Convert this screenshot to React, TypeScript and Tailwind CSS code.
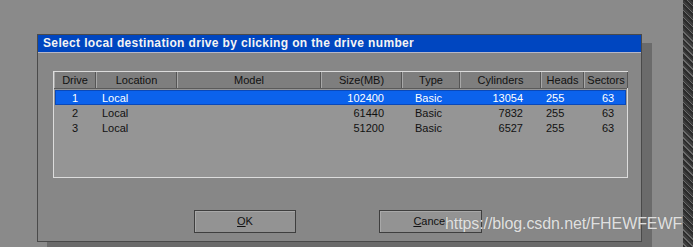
import React from 'react'

const cols = 'grid grid-cols-[42px_81px_144px_81px_58px_81px_43px_44px]'

const rows = [
  { drive: '1', loc: 'Local', size: '102400', type: 'Basic', cyl: '13054', heads: '255', sec: '63' },
  { drive: '2', loc: 'Local', size: '61440', type: 'Basic', cyl: '7832', heads: '255', sec: '63' },
  { drive: '3', loc: 'Local', size: '51200', type: 'Basic', cyl: '6527', heads: '255', sec: '63' },
]

const headers = ['Drive', 'Location', 'Model', 'Size(MB)', 'Type', 'Cylinders', 'Heads', 'Sectors']

export default function App() {
  return (
    <div className="w-[693px] h-[247px] bg-[#8a8a8a] flex overflow-hidden relative font-['Liberation_Sans',sans-serif]">
      <div className="pl-[37px] pt-[34px]">
        <div className="w-[605px] h-[208px] bg-[#878787] border border-[#4a4a4a] shadow-[10px_9px_0_#6b6b6b] flex flex-col">
          <div className="h-[18px] bg-[#0046c0] border-b border-[#b8b8c8] text-[#f4f4f4] font-bold text-[12px] leading-[17px] pl-[5px] tracking-[0.35px]">
            Select local destination drive by clicking on the drive number
          </div>

          <div className="ml-[15px] mt-[18px] w-[575px] h-[107px] border border-[#dcdcdc] bg-[#959595] text-[11px] text-[#111]">
            <div className={`${cols} h-[17px] bg-[#7e7e7e] border-b border-[#5a5a5a]`}>
              {headers.map((h) => (
                <div key={h} className="text-center leading-[16px] border-r border-[#555] border-l border-l-[#a8a8a8]">
                  {h}
                </div>
              ))}
            </div>
            <div className="pt-[1px] px-[1px]">
              {rows.map((r, i) => (
                <div
                  key={r.drive}
                  className={`${cols} h-[15px] leading-[14px] ${i === 0 ? 'bg-[#0b62ec] text-white border border-[#0a48b8]' : 'border border-transparent'}`}
                >
                  <div className="text-center pr-[4px]">{r.drive}</div>
                  <div className="pl-[4px]">{r.loc}</div>
                  <div></div>
                  <div className="text-right pr-[20px]">{r.size}</div>
                  <div className="pl-[11px]">{r.type}</div>
                  <div className="text-right pr-[20px]">{r.cyl}</div>
                  <div className="pl-[3px]">{r.heads}</div>
                  <div className="text-center">{r.sec}</div>
                </div>
              ))}
            </div>
          </div>

          <div className="flex mt-[32px] ml-[156px] gap-[83px] text-[11px] text-[#111]">
            <button className="w-[102px] h-[23px] bg-[#939393] border border-[#3e3e3e] shadow-[inset_1px_1px_0_#a8a8a8]">
              <span className="underline">O</span>K
            </button>
            <button className="w-[103px] h-[23px] bg-[#939393] border border-[#3e3e3e] shadow-[inset_1px_1px_0_#a8a8a8]">
              <span className="underline">C</span>ancel
            </button>
          </div>
        </div>
      </div>

      <div className="ml-auto w-[10px] h-full bg-[repeating-linear-gradient(45deg,#2c2c2c_0_2px,#6a6a6a_2px_3px,#3c3c3c_3px_5px)]"></div>

      <div className="absolute left-[445px] top-[214px] text-[16px] tracking-[-0.1px] text-[#eeeeee]/90 leading-[20px] [text-shadow:0_0_1px_#777]">
        https://blog.csdn.net/FHEWFEWF
      </div>
    </div>
  )
}
